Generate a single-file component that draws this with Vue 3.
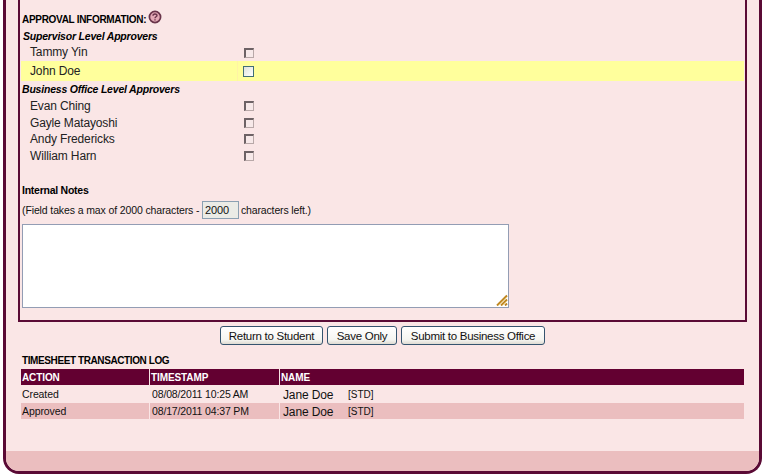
<script setup>
const supervisors = [
  { name: 'Tammy Yin', active: false },
  { name: 'John Doe', active: true },
]
const officers = ['Evan Ching', 'Gayle Matayoshi', 'Andy Fredericks', 'William Harn']
const log = [
  { action: 'Created', time: '08/08/2011 10:25 AM', name: 'Jane Doe', role: '[STD]' },
  { action: 'Approved', time: '08/17/2011 04:37 PM', name: 'Jane Doe', role: '[STD]' },
]
</script>

<template>
  <div class="page">
    <main class="frame">
      <section class="panel">
        <h2 class="title">
          <span class="t-title">APPROVAL INFORMATION:</span>
          <svg class="help" viewBox="0 0 14 14" width="14" height="14">
            <circle cx="7" cy="7" r="5.6" fill="#e3a9b5" stroke="#69344a" stroke-width="1.7" />
            <path d="M5 5.7C5 3.4 9 3.4 9 5.5C9 6.8 7 6.8 7 8.2M7 9.3V10.5" fill="none" stroke="#69344a" stroke-width="1.4" />
          </svg>
        </h2>
        <h3 class="group">Supervisor Level Approvers</h3>
        <div v-for="p in supervisors" :key="p.name" class="person" :class="{ active: p.active }">
          <span class="who">{{ p.name }}</span><span class="cell"><i class="box"></i></span>
        </div>
        <h3 class="group second">Business Office Level Approvers</h3>
        <div v-for="n in officers" :key="n" class="person office">
          <span class="who">{{ n }}</span><span class="cell"><i class="box"></i></span>
        </div>
        <h3 class="notes-title">Internal Notes</h3>
        <div class="limit">
          <span class="lead">(Field takes a max of 2000 characters -</span>
          <span class="count">2000</span>
          <span class="tail">characters left.)</span>
        </div>
        <div class="notes">
          <svg viewBox="0 0 12 12" width="12" height="12">
            <path d="M1 11.5L11 1.5M5 11.5L11 5.5M9 11.5L11 9.5" stroke="#bd8420" stroke-width="1.9" />
            <path d="M2.3 11.5L11 2.8M6.3 11.5L11 6.8" stroke="#f0cf78" stroke-width=".8" />
          </svg>
        </div>
      </section>
      <div class="buttons">
        <button class="b1">Return to Student</button>
        <button class="b2">Save Only</button>
        <button class="b3">Submit to Business Office</button>
      </div>
      <h2 class="log-title">TIMESHEET TRANSACTION LOG</h2>
      <div class="log">
        <div class="row head"><span>ACTION</span><span>TIMESTAMP</span><span>NAME</span></div>
        <div v-for="r in log" :key="r.action" class="row">
          <span class="act">{{ r.action }}</span><span class="time">{{ r.time }}</span>
          <span class="name"><b>{{ r.name }}</b><em>{{ r.role }}</em></span>
        </div>
      </div>
      <footer></footer>
    </main>
  </div>
</template>

<style>
body { margin: 0; background: #fff; overflow: hidden; }
</style>
<style scoped>
* { box-sizing: border-box; }
.page { width: 765px; height: 475px; padding: 0 3px 1px 3px; overflow: hidden; background: #fff; font-family: "Liberation Sans", Arial, sans-serif; color: #111; white-space: nowrap; }
.frame { height: 474px; border: solid #5a0a35; border-width: 0 3px 3px 3px; border-radius: 0 0 16px 16px; background: #fae6e6; overflow: hidden; display: flex; flex-direction: column; }
h2, h3 { margin: 0; font-size: 10.5px; font-weight: bold; color: #000; }
.panel { width: 729px; height: 322px; margin-left: 12px; flex: none; border: 2px solid #5a0a35; border-top: 0; padding: 10px 1px 0; display: flex; flex-direction: column; }
.title { height: 18px; display: flex; align-items: center; padding: 0 0 0 1px; gap: 2px; }
.t-title { width: 124px; font-size: 10px; letter-spacing: -.3px; }
.help { margin-top: -4px; }
.group { height: 16px; line-height: 16px; padding-left: 2px; font-style: italic; letter-spacing: -.2px; }
.person { height: 17px; display: flex; align-items: center; font-size: 12px; color: #222; letter-spacing: -.14px; }
.person.active { height: 20px; width: 723px; background: #ffff9c; }
.person:not(.active):not(.office) .who { padding-bottom: 1px; }
.group.second { height: 17px; line-height: 17px; padding-left: 1px; }
.office { height: 16.6px; }
.who { width: 216px; padding-left: 9px; }
.cell { padding-left: 6px; height: 100%; display: flex; align-items: center; border-left: 1px solid transparent; }
.active .cell { padding-left: 5px; border-color: #fff3a5; }
.box { width: 10px; height: 10px; border: 1px solid #b8a8a8; border-top: 2px solid #6d6265; border-left: 2px solid #6d6265; background: #f7e9e9; }
.active .box { width: 11px; height: 11px; border: 1px solid #416e76; background: linear-gradient(135deg, #dfe2dc, #fff); }
.notes-title { margin-top: 18.4px; height: 14px; line-height: 14px; padding-left: 1px; letter-spacing: -.25px; }
.limit { height: 20px; margin-top: 3px; display: flex; align-items: center; font-size: 10.5px; padding-left: 1px; letter-spacing: -.12px; }
.lead { width: 180px; padding-top: 1px; }
.count { width: 37px; height: 18px; border: 1px solid #8ba0b2; background: #ebebe6; line-height: 17px; padding-left: 2px; font-size: 11px; }
.tail { margin-left: 2px; letter-spacing: -.15px; padding-top: 1px; }
.notes { width: 487px; height: 84px; margin: 4px 0 0 1px; border: 1px solid #939db4; background: #fff; display: flex; align-items: flex-end; justify-content: flex-end; padding: 1px 0; }
.buttons { margin: 4px 0 0 214px; height: 20px; display: flex; gap: 4px; flex: none; }
button { height: 19px; border: 1px solid #35546f; border-radius: 3px; padding: 1px 0 0; font: 11.5px/16px "Liberation Sans", Arial, sans-serif; letter-spacing: -.28px; color: #111; background: linear-gradient(#fff, #f5f5f1 75%, #dedbd2); white-space: nowrap; }
.b1 { width: 103px; }
.b2 { width: 70px; }
.b3 { width: 144px; }
.log-title { margin: 6px 0 0 16px; height: 17px; line-height: 17px; flex: none; font-size: 10px; letter-spacing: -.4px; }
.log { margin-left: 15px; width: 723px; flex: none; display: flex; flex-direction: column; gap: 1px; }
.row { height: 16px; display: grid; grid-template-columns: 128px 129px 464px; grid-template-rows: 16px; gap: 1px; line-height: 16px; font-size: 10.5px; }
.row > span { padding-left: 1px; }
.head > span { background: #630031; color: #fff; font-weight: bold; font-size: 10px; letter-spacing: -.1px; line-height: 17px; }
.row:last-child > span { background: #ebbebf; }
.row > .act { letter-spacing: -.1px; }
.row > .time { padding-left: 2px; letter-spacing: -.15px; }
.row > .name { display: flex; padding-left: 3px; }
.name b { font-weight: normal; font-size: 12px; width: 65px; line-height: 18px; letter-spacing: -.14px; }
.name em { font-style: normal; font-size: 10px; line-height: 17px; }
footer { margin-top: auto; height: 20px; background: #ebbebf; flex: none; }
</style>
